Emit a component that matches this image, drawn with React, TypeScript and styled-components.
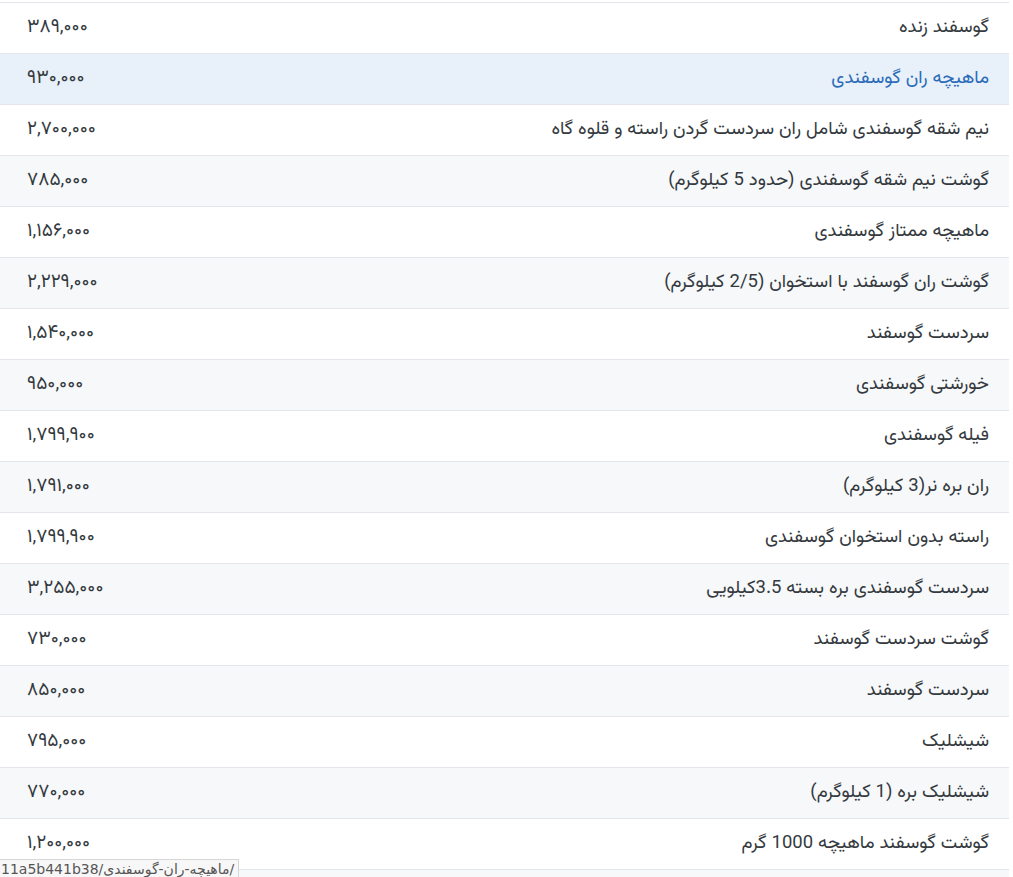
import React from "react";
import styled, { createGlobalStyle } from "styled-components";

const GlobalStyle = createGlobalStyle`
  html, body {
    margin: 0;
    padding: 0;
    background: #ffffff;
  }
  body {
    font-family: "Vazirmatn", "DejaVu Sans", "Noto Sans", sans-serif;
    color: #343a40;
    overflow: hidden;
  }
`;

const Page = styled.div`
  padding-top: 2px;
  width: 1009px;
`;

const Table = styled.table`
  direction: rtl;
  width: 100%;
  border-collapse: collapse;
  font-size: 18.5px;
`;

const Row = styled.tr<{ $striped: boolean; $hover?: boolean }>`
  background: ${(p) => (p.$hover ? "#e8f0f9" : p.$striped ? "#f7f8fa" : "#ffffff")};
`;

const NameCell = styled.td<{ $hover?: boolean }>`
  border-top: 1px solid #e3e6ea;
  padding: 12px 20px 12px 12px;
  height: 26px;
  line-height: 26px;
  text-align: right;
  white-space: nowrap;
  color: ${(p) => (p.$hover ? "#2a6bb8" : "#343a40")};
`;

const PriceCell = styled.td`
  border-top: 1px solid #e3e6ea;
  padding: 12px 12px 12px 27px;
  height: 26px;
  line-height: 26px;
  width: 120px;
  text-align: left;
  white-space: nowrap;
  font-size: 19px;
`;

const StatusBubble = styled.div`
  position: fixed;
  left: 0;
  bottom: 0;
  width: 238px;
  height: 17px;
  background: #f7f7f7;
  border-top: 1px solid #d6d6d6;
  border-right: 1px solid #d6d6d6;
  overflow: hidden;
  direction: ltr;
  display: flex;
  align-items: center;
  font-family: "DejaVu Sans", sans-serif;
  font-size: 14px;
  color: #555;
  white-space: nowrap;
`;

const StatusText = styled.span`
  padding-left: 1px;
`;

type Item = { name: string; price: string };

const items: Item[] = [
  { name: "گوسفند زنده", price: "۳۸۹,۰۰۰" },
  { name: "ماهیچه ران گوسفندی", price: "۹۳۰,۰۰۰" },
  { name: "نیم شقه گوسفندی شامل ران سردست گردن راسته و قلوه گاه", price: "۲,۷۰۰,۰۰۰" },
  { name: "گوشت نیم شقه گوسفندی (حدود 5 کیلوگرم)", price: "۷۸۵,۰۰۰" },
  { name: "ماهیچه ممتاز گوسفندی", price: "۱,۱۵۶,۰۰۰" },
  { name: "گوشت ران گوسفند با استخوان (2/5 کیلوگرم)", price: "۲,۲۲۹,۰۰۰" },
  { name: "سردست گوسفند", price: "۱,۵۴۰,۰۰۰" },
  { name: "خورشتی گوسفندی", price: "۹۵۰,۰۰۰" },
  { name: "فیله گوسفندی", price: "۱,۷۹۹,۹۰۰" },
  { name: "ران بره نر(3 کیلوگرم)", price: "۱,۷۹۱,۰۰۰" },
  { name: "راسته بدون استخوان گوسفندی", price: "۱,۷۹۹,۹۰۰" },
  { name: "سردست گوسفندی بره بسته 3.5کیلویی", price: "۳,۲۵۵,۰۰۰" },
  { name: "گوشت سردست گوسفند", price: "۷۳۰,۰۰۰" },
  { name: "سردست گوسفند", price: "۸۵۰,۰۰۰" },
  { name: "شیشلیک", price: "۷۹۵,۰۰۰" },
  { name: "شیشلیک بره (1 کیلوگرم)", price: "۷۷۰,۰۰۰" },
  { name: "گوشت گوسفند ماهیچه 1000 گرم", price: "۱,۲۰۰,۰۰۰" },
  { name: "\u00a0", price: "\u00a0" },
];

export default function App() {
  return (
    <>
      <GlobalStyle />
      <Page>
        <Table>
          <tbody>
            {items.map((it, i) => {
              const hover = i === 1;
              return (
                <Row key={i} $striped={i % 2 === 1} $hover={hover}>
                  <NameCell $hover={hover}>{it.name}</NameCell>
                  <PriceCell>{it.price}</PriceCell>
                </Row>
              );
            })}
          </tbody>
        </Table>
      </Page>
      <StatusBubble>
        <StatusText>11a5b441b38/ماهیچه-ران-گوسفندی/</StatusText>
      </StatusBubble>
    </>
  );
}
